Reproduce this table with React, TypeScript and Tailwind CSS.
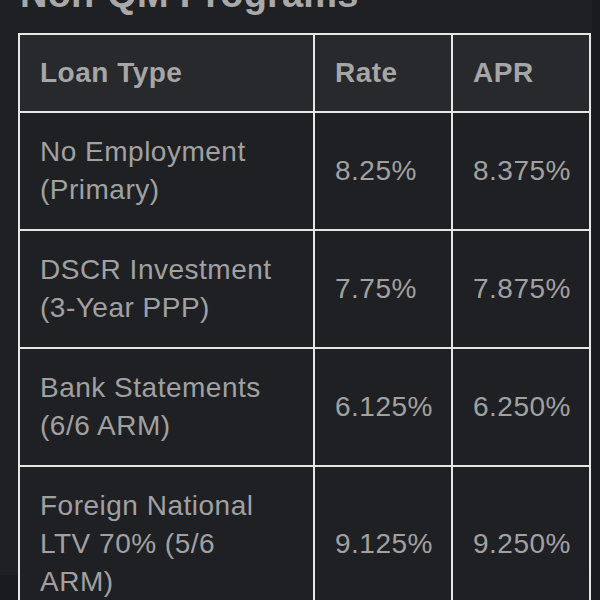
const rows = [
  { type: ["No Employment", "(Primary)"], rate: "8.25%", apr: "8.375%" },
  { type: ["DSCR Investment", "(3-Year PPP)"], rate: "7.75%", apr: "7.875%" },
  { type: ["Bank Statements", "(6/6 ARM)"], rate: "6.125%", apr: "6.250%" },
  { type: ["Foreign National", "LTV 70% (5/6", "ARM)"], rate: "9.125%", apr: "9.250%" },
];

export default function App() {
  return (
    <div className="h-[600px] w-[600px] overflow-hidden bg-[#1a1b1e] font-['Liberation_Sans',Arial,sans-serif]">
      <div className="h-full w-[592px] bg-[#1f2023] pl-[18px]">
        {/* Title (scrolled partly out of view) */}
        <h2 className="-mt-[25px] mb-[20px] pl-[2px] text-[38px] font-bold leading-[38px] tracking-[0.2px] text-[#a9a9aa]">
          Non-QM Programs
        </h2>

        <table className="w-[571px] table-fixed border-collapse text-[28px] leading-[38px] tracking-[0.5px]">
          <colgroup>
            <col className="w-[295px]" />
            <col className="w-[138px]" />
            <col className="w-[138px]" />
          </colgroup>
          <thead>
            <tr className="bg-[#28292c]">
              <th className="border-2 border-[#e6e6e6] px-5 py-[19px] text-left font-bold text-[#a6a6a7]">Loan Type</th>
              <th className="border-2 border-[#e6e6e6] px-5 py-[19px] text-left font-bold text-[#a6a6a7]">Rate</th>
              <th className="border-2 border-[#e6e6e6] px-5 py-[19px] text-left font-bold text-[#a6a6a7]">APR</th>
            </tr>
          </thead>
          <tbody>
            {rows.map((r) => (
              <tr key={r.rate} className="bg-[#1f2023]">
                <td className="border-2 border-[#e6e6e6] p-5 align-middle text-[#a1a1a2]">
                  {r.type.map((line) => (
                    <div key={line}>{line}</div>
                  ))}
                </td>
                <td className="border-2 border-[#e6e6e6] p-5 align-middle text-[#a1a1a2]">{r.rate}</td>
                <td className="border-2 border-[#e6e6e6] p-5 align-middle text-[#a1a1a2]">{r.apr}</td>
              </tr>
            ))}
          </tbody>
        </table>
      </div>
    </div>
  );
}
